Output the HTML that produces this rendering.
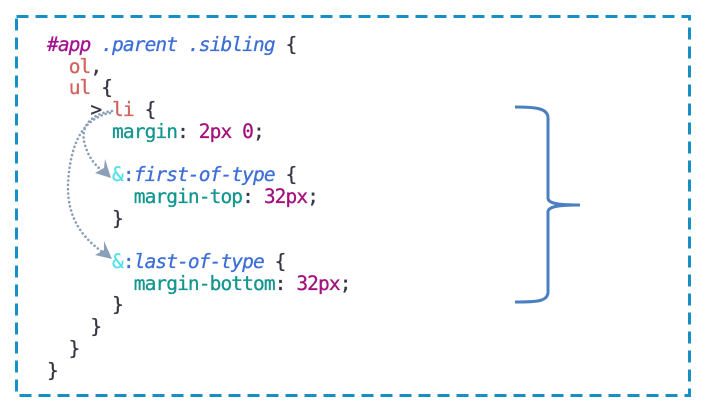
<!DOCTYPE html>
<html><head><style>
body{margin:0;width:710px;height:413px;background:#fff;position:relative;overflow:hidden}
pre{position:absolute;left:47px;top:34px;margin:0;font-family:"DejaVu Sans Mono","Liberation Mono",monospace;font-size:19.5px;letter-spacing:-0.9px;line-height:21.7px;color:#363646;-webkit-text-stroke:0.3px currentColor}
.i{font-style:italic}.a{color:#a3118c}.c{color:#3e6fd6}.t{color:#d0645f}.p{color:#13968f}.n{color:#a3117c}.am{color:#4fe1ea}
svg{position:absolute;left:0;top:0}
</style></head><body>
<svg width="710" height="413">
<rect x="16.5" y="16.5" width="673" height="379" fill="none" stroke="#1690c4" stroke-width="3" stroke-dasharray="12,7"/>
<path d="M515,107 C535,107 548,108 548,118 L548,198 C548,203 556,205 580,205 C556,205 548,207 548,212 L548,292 C548,302 535,302 515,302" fill="none" stroke="#4a7fc0" stroke-width="3"/>
<g fill="none" stroke="#8a9fb8" stroke-width="2.6" stroke-dasharray="0.1,4.2" stroke-linecap="round">
<path d="M112,111 C90,114 78,128 86,148 C90,160 98,168 104,172"/>
<path d="M110,113 C85,118 70,140 68,185 C67,220 85,240 104,253"/>
</g>
<g fill="#8a9fb8">
<path d="M111,178 L95,173 L104,168 L105,159 Z"/>
<path d="M112,259 L95,255 L104,250 L104,241 Z"/>
</g>
</svg>
<pre><span class="i a">#app</span> <span class="i c">.parent .sibling</span> {
  <span class="t">ol</span>,
  <span class="t">ul</span> {
    &gt; <span class="t">li</span> {
      <span class="p">margin</span>: <span class="n">2px 0</span>;

      <span class="am">&amp;</span><span class="c">:</span><span class="i c">first-of-type</span> {
        <span class="p">margin-top</span>: <span class="n">32px</span>;
      }

      <span class="am">&amp;</span><span class="c">:</span><span class="i c">last-of-type</span> {
        <span class="p">margin-bottom</span>: <span class="n">32px</span>;
      }
    }
  }
}</pre>
</body></html>
